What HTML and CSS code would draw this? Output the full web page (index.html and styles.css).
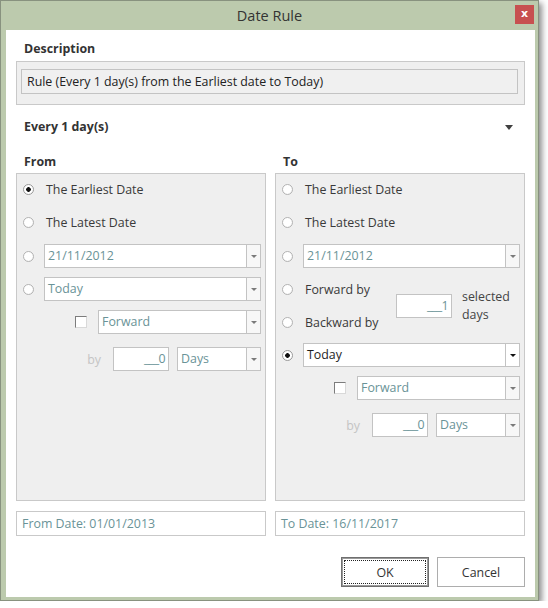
FILE: index.html
```html
<!DOCTYPE html>
<html>
<head>
<meta charset="utf-8">
<title>Date Rule</title>
<link rel="stylesheet" href="styles.css">
</head>
<body>
<div class="window">
  <div class="titlebar">
    <span class="title">Date Rule</span>
    <span class="close">x</span>
  </div>
  <div class="client">
    <div class="label">Description</div>
    <div class="desc-panel">
      <div class="desc-box">Rule (Every 1 day(s) from the Earliest date to Today)</div>
    </div>
    <div class="every-row">
      <span class="label nopad">Every 1 day(s)</span>
      <span class="caret"></span>
    </div>
    <div class="cols">
      <div class="col">
        <div class="label head">From</div>
        <div class="panel">
          <div class="row"><span class="radio on"></span><span class="opt">The Earliest Date</span></div>
          <div class="row"><span class="radio"></span><span class="opt">The Latest Date</span></div>
          <div class="row"><span class="radio"></span><div class="combo grow"><span class="val">21/11/2012</span><span class="arr"></span></div></div>
          <div class="row"><span class="radio"></span><div class="combo grow"><span class="val">Today</span><span class="arr"></span></div></div>
          <div class="row check"><span class="checkbox"></span><div class="combo grow"><span class="val">Forward</span><span class="arr"></span></div></div>
          <div class="row by-row"><span class="by">by</span><span class="num">___0</span><div class="combo days"><span class="val">Days</span><span class="arr"></span></div></div>
        </div>
      </div>
      <div class="col">
        <div class="label head">To</div>
        <div class="panel">
          <div class="row"><span class="radio"></span><span class="opt">The Earliest Date</span></div>
          <div class="row"><span class="radio"></span><span class="opt">The Latest Date</span></div>
          <div class="row"><span class="radio"></span><div class="combo grow"><span class="val">21/11/2012</span><span class="arr"></span></div></div>
          <div class="fb">
            <div class="fb-left">
              <div class="row"><span class="radio"></span><span class="opt">Forward by</span></div>
              <div class="row"><span class="radio"></span><span class="opt">Backward by</span></div>
            </div>
            <span class="num">___1</span>
            <span class="sel">selected<br>days</span>
          </div>
          <div class="row"><span class="radio on"></span><div class="combo grow enabled"><span class="val">Today</span><span class="arr"></span></div></div>
          <div class="row check"><span class="checkbox"></span><div class="combo grow"><span class="val">Forward</span><span class="arr"></span></div></div>
          <div class="row by-row"><span class="by">by</span><span class="num">___0</span><div class="combo days"><span class="val">Days</span><span class="arr"></span></div></div>
        </div>
      </div>
    </div>
    <div class="result-row">
      <div class="result">From Date: 01/01/2013</div>
      <div class="result">To Date: 16/11/2017</div>
    </div>
    <div class="buttons">
      <div class="btn ok"><span class="focus">OK</span></div>
      <div class="btn">Cancel</div>
    </div>
  </div>
</div>
</body>
</html>
```
FILE: styles.css
```css
* { box-sizing: border-box; }
body {
  margin: 0;
  background: #fff;
  font-family: "Open Sans", "Noto Sans", sans-serif;
  font-size: 12.4px;
  color: #333;
}
.window {
  width: 539px;
  border: 1px solid #88927f;
  background: #bccaad;
  box-shadow: 3px 3px 6px rgba(0,0,0,0.45);
  display: flex;
  flex-direction: column;
}
.titlebar {
  height: 29px;
  display: grid;
  grid-template-columns: 1fr auto 1fr;
  align-items: start;
}
.title {
  grid-column: 2;
  font-size: 14.5px;
  line-height: 29px;
  color: #333;
}
.close {
  grid-column: 3;
  justify-self: end;
  margin: 4px 4px 0 0;
  width: 19px;
  height: 19px;
  background: #c75050;
  color: #fff;
  font: bold 11px "DejaVu Sans", sans-serif;
  display: flex;
  align-items: center;
  justify-content: center;
  line-height: 1;
  padding-bottom: 2px;
}
.client {
  margin: 0 3px 3px 5px;
  background: #fff;
  padding: 11px 10px 10px 10px;
  display: flex;
  flex-direction: column;
}
.label {
  font-weight: 700;
  line-height: 16px;
  padding-left: 8px;
  color: #333;
}
.label.nopad { padding-left: 0; }
.desc-panel {
  margin-top: 4px;
  background: #efefef;
  border: 1px solid #c9c9c9;
  padding: 7px 6px 10px 4px;
}
.desc-box {
  height: 25px;
  border: 1px solid #c3c3c3;
  background: #f0f0f0;
  padding-left: 5px;
  line-height: 23px;
  color: #222;
}
.every-row {
  height: 44px;
  display: flex;
  align-items: center;
  justify-content: space-between;
  padding: 0 12px 0 8px;
}
.caret {
  width: 0;
  height: 0;
  border-left: 4.5px solid transparent;
  border-right: 4.5px solid transparent;
  border-top: 5px solid #404040;
}
.cols {
  display: grid;
  grid-template-columns: 1fr 1fr;
  column-gap: 9px;
  margin-top: 5px;
}
.head { margin-bottom: 3px; }
.panel {
  height: 328px;
  background: #efefef;
  border: 1px solid #c9c9c9;
  padding: 3px 4px 0 6px;
  display: flex;
  flex-direction: column;
  gap: 9px;
}
.row {
  display: flex;
  align-items: center;
  height: 24px;
}
.panel > .row:nth-child(3) { margin-top: 1px; }
.radio {
  flex: none;
  width: 11px;
  height: 11px;
  border-radius: 50%;
  border: 1px solid #b3b3b3;
  background: radial-gradient(circle at 45% 45%, #fff 0 55%, #e6e6e6 100%);
  margin-right: 10px;
}
.radio.on {
  border-color: #9a9a9a;
  background: radial-gradient(circle, #111 0 2px, #fff 2.6px);
}
.opt {
  padding-left: 2px;
  color: #3a3a3a;
}
.combo {
  display: flex;
  height: 24px;
  border: 1px solid #c3c3c3;
  background: #fff;
}
.combo.grow { flex: 1; }
.combo .val {
  flex: 1;
  padding-left: 3px;
  line-height: 22px;
  color: #6a9397;
}
.combo .arr {
  width: 14px;
  flex: none;
  border-left: 1px solid #c3c3c3;
  background: #f7f7f7;
  display: flex;
  align-items: center;
  justify-content: center;
}
.combo .arr::before {
  content: "";
  border-left: 3px solid transparent;
  border-right: 3px solid transparent;
  border-top: 3px solid #7a7a7a;
}
.combo.enabled .val { color: #1e1e1e; }
.combo.enabled .arr { background: #fff; }
.combo.enabled .arr::before { border-top-color: #111; }
.row.check { padding-left: 52px; }
.checkbox {
  flex: none;
  width: 12px;
  height: 12px;
  border: 1px solid;
  border-color: #7c7c7c #d9d9d9 #d9d9d9 #7c7c7c;
  background: #fff;
  margin-right: 11px;
}
.row.by-row {
  justify-content: flex-end;
  margin-top: 4px;
}
.by {
  color: #c4c4c4;
  margin-right: 12px;
}
.num {
  flex: none;
  width: 56px;
  height: 24px;
  border: 1px solid #c3c3c3;
  background: #fff;
  text-align: right;
  padding-right: 3px;
  line-height: 22px;
  color: #6a9397;
  letter-spacing: -0.6px;
}
.by-row .num { margin-right: 8px; }
.combo.days { width: 84px; flex: none; }
.fb {
  display: flex;
  align-items: center;
}
.fb-left {
  width: 114px;
  display: flex;
  flex-direction: column;
  gap: 9px;
}
.sel {
  margin-left: 10px;
  line-height: 18px;
  color: #444;
}
.result-row {
  display: grid;
  grid-template-columns: 1fr 1fr;
  column-gap: 9px;
  margin-top: 10px;
}
.result {
  height: 25px;
  border: 1px solid #c9c9c9;
  line-height: 23px;
  padding-left: 5px;
  color: #6a9397;
}
.buttons {
  display: flex;
  justify-content: flex-end;
  gap: 8px;
  margin-top: 21px;
}
.btn {
  width: 88px;
  height: 30px;
  border: 1px solid #adadad;
  background: #fff;
  color: #333;
  display: flex;
  align-items: center;
  justify-content: center;
}
.btn.ok {
  border-color: #6f6f6f;
  box-shadow: inset 0 0 0 1px #9a9a9a;
  padding: 2px;
  align-items: stretch;
  justify-content: stretch;
}
.focus {
  flex: 1;
  border: 1px dotted #222;
  display: flex;
  align-items: center;
  justify-content: center;
}
```
